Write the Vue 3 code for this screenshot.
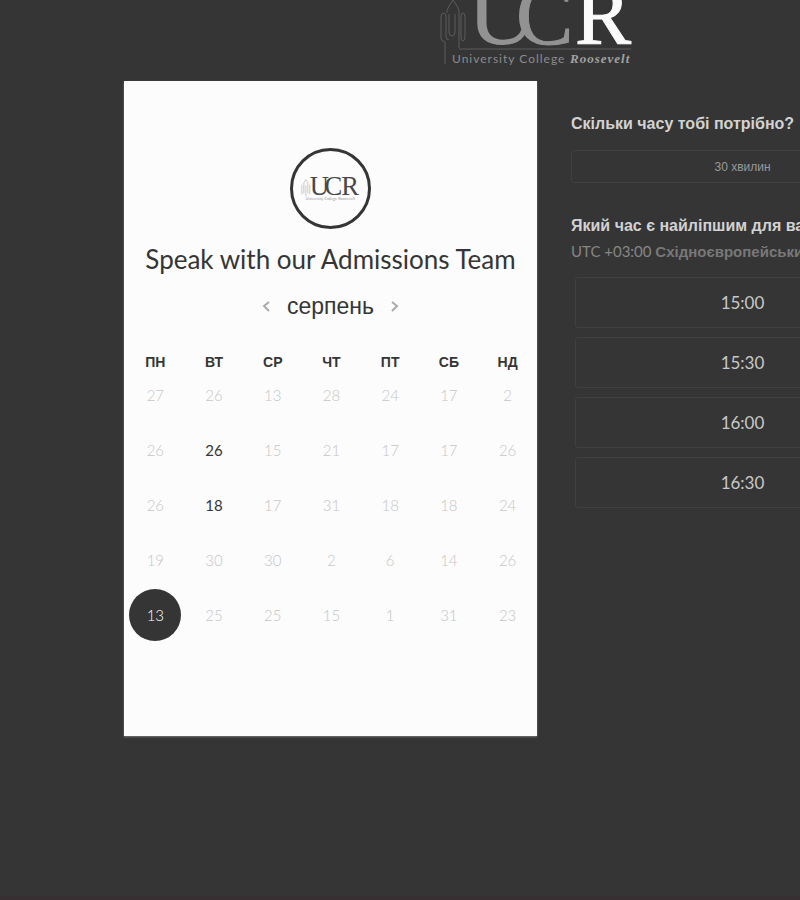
<script setup>
import { ref } from 'vue'

const weekdays = ['ПН', 'ВТ', 'СР', 'ЧТ', 'ПТ', 'СБ', 'НД']
const weeks = [
  [27, 26, 13, 28, 24, 17, 2],
  [26, 26, 15, 21, 17, 17, 26],
  [26, 18, 17, 31, 18, 18, 24],
  [19, 30, 30, 2, 6, 14, 26],
  [13, 25, 25, 15, 1, 31, 23],
]
const open = ['1-1', '2-1', '4-0']
const selected = ref('4-0')
const slots = ['15:00', '15:30', '16:00', '16:30']
</script>

<template>
  <div class="page">
    <header class="brand">
      <svg class="brand-logo" viewBox="0 0 196 68" role="img" aria-label="University College Roosevelt">
        <g class="tower">
          <path d="M8 13 V11 Q8 10 10 6 L14 0 L18 6 Q20 10 20 11 V48 M6 64 V42 Q2 41 2 38 V17 Q2 13 5 13 Q7 13 7 17 V36 Q7 40 10 40 M10 14 V32 Q10 36 13 36 Q16 36 16 32 V14 M22 16 Q22 13 24 13 Q26 13 26 17 V37 Q26 41 24 41 Q22 41 22 37 Z" />
          <path d="M20 49 H192" />
        </g>
        <text class="mark mark-u" x="28" y="44">U</text>
        <text class="mark mark-c" x="77" y="44">C</text>
        <text class="mark mark-r" x="136" y="44">R</text>
        <text class="name" x="13" y="63">University College</text>
        <text class="name-accent" x="131" y="63">Roosevelt</text>
      </svg>
    </header>

    <main class="booking">
      <section class="card">
        <div class="avatar">
          <svg viewBox="0 0 76 76" role="img" aria-label="UCR">
            <path class="mini-tower" d="M9 44 V34 M11 43 V32 L13 29 L15 32 V43 M17 44 V34 M13 46 V35" />
            <text class="mini-mark" x="17" y="45">U</text>
            <text class="mini-mark" x="32" y="45">C</text>
            <text class="mini-mark" x="49" y="45">R</text>
            <text class="mini-name" x="13" y="50">University College Roosevelt</text>
          </svg>
        </div>
        <h1 class="title">Speak with our Admissions Team</h1>
        <div class="month">
          <button class="arrow" type="button" aria-label="Попередній місяць">
            <svg viewBox="0 0 10 15"><path d="M8 3 L3 7 L8 12" /></svg>
          </button>
          <h2 class="month-name">серпень</h2>
          <button class="arrow" type="button" aria-label="Наступний місяць">
            <svg viewBox="0 0 10 15"><path d="M2 3 L7 7 L2 12" /></svg>
          </button>
        </div>
        <table class="calendar">
          <thead>
            <tr><th v-for="d in weekdays" :key="d" scope="col">{{ d }}</th></tr>
          </thead>
          <tbody>
            <tr v-for="(week, r) in weeks" :key="r">
              <td v-for="(day, c) in week" :key="c">
                <button
                  class="day"
                  type="button"
                  :class="{ selected: selected === `${r}-${c}` }"
                  :disabled="!open.includes(`${r}-${c}`)"
                  @click="selected = `${r}-${c}`"
                >{{ day }}</button>
              </td>
            </tr>
          </tbody>
        </table>
      </section>

      <section class="options">
        <h3 class="question">Скільки часу тобі потрібно?</h3>
        <button class="duration" type="button">30 хвилин</button>
        <h3 class="question">Який час є найліпшим для вас?</h3>
        <p class="zone">UTC +03:00 <span class="zone-name">Східноєвропейський час</span></p>
        <ul class="slots">
          <li v-for="s in slots" :key="s"><button class="slot" type="button">{{ s }}</button></li>
        </ul>
      </section>
    </main>
    <footer class="edge"></footer>
  </div>
</template>

<style>
body {
  margin: 0;
  background: #353535;
  overflow-x: hidden;
}
</style>

<style scoped>
.page {
  box-sizing: border-box;
  min-width: 1074px;
  min-height: 100vh;
  display: flex;
  flex-direction: column;
  background: #353535;
  color: #353535;
  font-family: Lato, "Liberation Sans", sans-serif;
}
h1, h2, h3, p, ul {
  margin: 0;
  padding: 0;
  font-weight: 400;
}
button {
  font: inherit;
  color: inherit;
  background: none;
  border: 0;
  padding: 0;
  cursor: pointer;
}
.brand {
  display: flex;
  justify-content: center;
  padding-bottom: 13px;
}
.brand-logo {
  width: 196px;
  height: 68px;
}
.tower {
  fill: none;
  stroke: #5c5c5c;
  stroke-width: 1;
}
.mark {
  font-family: "Liberation Serif", serif;
  stroke-width: 1;
}
.mark-u {
  font-size: 98px;
  fill: #929292;
}
.mark-c {
  font-size: 86px;
  fill: #929292;
  stroke: #929292;
}
.mark-r {
  font-size: 84px;
  fill: #fbfbfb;
  stroke: #fbfbfb;
}
.name {
  font: 12px Lato, sans-serif;
  letter-spacing: 1px;
  fill: #8c8c8c;
}
.name-accent {
  font: italic bold 13px "Liberation Serif", serif;
  letter-spacing: 1px;
  fill: #a2a2a2;
}
.booking {
  display: grid;
  grid-template-columns: 1fr 1fr;
  width: 826px;
  margin: 0 auto;
}
.card {
  display: flex;
  flex-direction: column;
  align-items: center;
  padding: 67px 0 94px;
  background: #fcfcfc;
  box-shadow: 0 1px 2px #777;
}
.avatar {
  box-sizing: border-box;
  width: 81px;
  height: 81px;
  border: 3px solid #353535;
  border-radius: 50%;
}
.avatar svg {
  display: block;
  width: 100%;
}
.mini-tower {
  fill: none;
  stroke: #c9c9c9;
  stroke-width: 1;
}
.mini-mark {
  font: 27px "Liberation Serif", serif;
  fill: #484848;
}
.mini-name {
  font: 4px Lato, sans-serif;
  fill: #999;
}
.title {
  padding-top: 13px;
  font-size: 26px;
  line-height: 34px;
}
.month {
  display: flex;
  align-items: center;
  gap: 16px;
  padding-top: 16px;
}
.month-name {
  font: 23px/28px "Liberation Sans", sans-serif;
}
.arrow {
  display: flex;
}
.arrow svg {
  width: 10px;
  height: 15px;
  fill: none;
  stroke: #aaa;
  stroke-width: 2;
}
.calendar {
  box-sizing: border-box;
  width: calc(100% - 2px);
  margin: 37px 0 0 2px;
  table-layout: fixed;
  border-collapse: collapse;
}
.calendar th {
  padding: 0;
  font: bold 14px/10px "Liberation Sans", sans-serif;
}
.calendar td {
  height: 55px;
  padding: 0;
  text-align: center;
}
.day {
  width: 52px;
  height: 52px;
  border-radius: 50%;
  font-size: 15px;
  vertical-align: middle;
}
.day:disabled {
  color: #c6c6c6;
  font-weight: 300;
  cursor: default;
}
.day.selected {
  background: #353535;
  color: #fcfcfc;
  font-weight: 300;
}
.options {
  display: flex;
  flex-direction: column;
  padding: 32px 36px 0 34px;
}
.question {
  font: bold 16px/22px "Liberation Sans", sans-serif;
  color: #d2d2d2;
  white-space: nowrap;
}
.duration {
  height: 33px;
  margin: 15px 0 32px;
  border: 1px solid #404040;
  border-radius: 3px;
  font: 12px "Liberation Sans", sans-serif;
  color: #999;
}
.zone {
  padding-top: 3px;
  font-size: 15px;
  line-height: 22px;
  color: #868686;
  white-space: nowrap;
}
.zone-name {
  font: bold 15px "Liberation Sans", sans-serif;
  color: #787878;
}
.slots {
  display: grid;
  gap: 9px;
  padding: 15px 4px 0;
  list-style: none;
}
.slots li {
  display: flex;
}
.slot {
  flex: 1;
  height: 51px;
  border: 1px solid #404040;
  border-radius: 3px;
  font-size: 17px;
  color: #c8c8c8;
}
.edge {
  height: 4px;
  margin-top: auto;
  background: #382f33;
}
</style>
